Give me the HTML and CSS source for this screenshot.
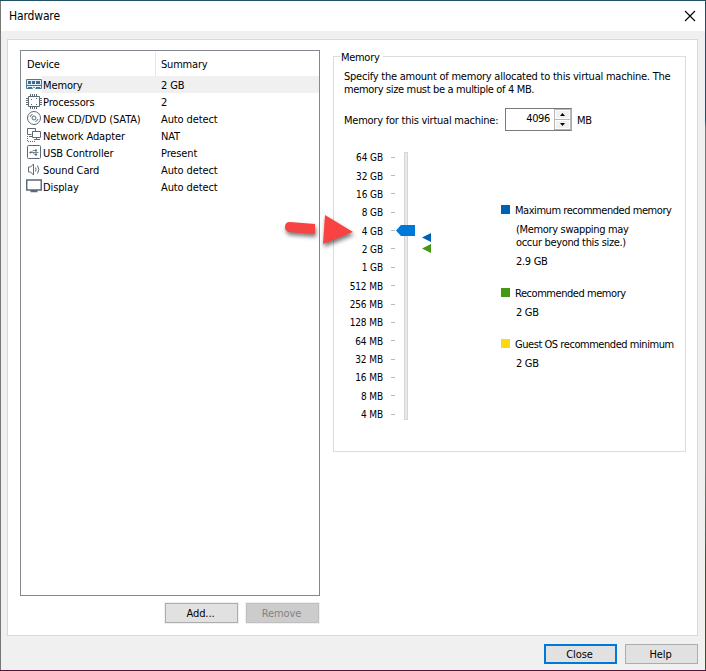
FILE: index.html
```html
<!DOCTYPE html>
<html lang="en">
<head>
<meta charset="utf-8">
<title>Hardware</title>
<link rel="stylesheet" href="styles.css">
</head>
<body>
<div class="desktop">
<main class="window">
  <header class="titlebar"><h1>Hardware</h1>
    <svg class="close-x" width="12" height="12" viewBox="0 0 12 12"><path d="M1 1L11 11M11 1L1 11"/></svg>
  </header>
  <section class="panel">
    <div class="left">
      <div class="list">
        <div class="head"><span>Device</span><span>Summary</span></div>
        <div class="row selected"><svg width="16" height="17" viewBox="0 0 16 17"><path class="memory-board" d="M.5 3.500h15v9h-6l-1-1h-1l-1 1h-6z"/><path class="chip" d="M2 5h3v3H2zM6 5h3v3H6zM10 5h4v3h-4z"/><path d="M1 9.500h14M2 11.500h4M10 11.500h4"/></svg><span>Memory</span><span>2 GB</span></div>
        <div class="row"><svg width="16" height="17" viewBox="0 0 16 17"><path d="M2.500 3.500h11v10h-11zM4.500 1v2M6.500 1v2M8.500 1v2M10.500 1v2M4.500 14v2M6.500 14v2M8.500 14v2M10.500 14v2M0 5.500h2M0 7.500h2M0 9.500h2M0 11.500h2M14 5.500h2M14 7.500h2M14 9.500h2M14 11.500h2M5 6.500h1M10 5.500h1M10 11.500h1M5 11.500h1"/></svg><span>Processors</span><span>2</span></div>
        <div class="row"><svg width="16" height="17" viewBox="0 0 16 17"><circle cx="8" cy="8" r="6.500"/><circle cx="8" cy="8" r="2"/><path d="M4 7Q4.500 5 6.500 4.500M9.500 11.500Q11.500 11 12 9"/></svg><span>New CD/DVD (SATA)</span><span>Auto detect</span></div>
        <div class="row"><svg width="16" height="17" viewBox="0 0 16 17"><path d="M5.500 7.500h-4v-6h8v3M3 9.500h3M6.500 4.500h8v6h-8zM10.500 10.500v2M8 12.500h6"/><path class="dots" d="M1.500 9v5.500H10"/></svg><span>Network Adapter</span><span>NAT</span></div>
        <div class="row"><svg width="16" height="17" viewBox="0 0 16 17"><rect x="1.500" y="1.500" width="13" height="13" rx="1"/><path class="trident" d="M3.500 8.500h9M5 8.500l2-2h2M7 8.500l1.500 2H10"/><circle class="solid" cx="4.500" cy="8.500" r="1"/><path class="solid" d="M9 5.500h2v2H9zM9 9.500h2v2H9z"/></svg><span>USB Controller</span><span>Present</span></div>
        <div class="row"><svg width="16" height="17" viewBox="0 0 16 17"><path d="M2.500 6v5h2l3 3v-11l-3 3zM9.500 6.500Q10.500 8.500 9.500 10.500M11.500 4.500Q14 8.500 11.500 12.500"/></svg><span>Sound Card</span><span>Auto detect</span></div>
        <div class="row"><svg width="16" height="17" viewBox="0 0 16 17"><path class="screen" d="M.7 2h14.600v10H.7zM4.500 13.500h7"/></svg><span>Display</span><span>Auto detect</span></div>
      </div>
      <div class="list-actions"><button class="btn">Add...</button><button class="btn disabled" disabled>Remove</button></div>
    </div>
    <div class="group">
      <h2>Memory</h2>
      <p class="description"><span class="first-line">Specify the amount of memory allocated to this virtual machine. The</span><br><span>memory size must be a multiple of 4 MB.</span></p>
      <div class="memory-field"><label>Memory for this virtual machine:</label>
        <div class="spin"><span>4096</span><div class="steppers"><i><svg width="5" height="3"><path d="M0 3h5L2.500 0z"/></svg></i><i><svg width="5" height="3"><path d="M0 0h5L2.500 3z"/></svg></i></div></div><span class="unit">MB</span></div>
      <div class="content">
        <div class="scale">
          <span>64 GB</span><span>32 GB</span><span>16 GB</span><span>8 GB</span><span>4 GB</span><span>2 GB</span><span>1 GB</span><span>512 MB</span><span>256 MB</span><span>128 MB</span><span>64 MB</span><span>32 MB</span><span>16 MB</span><span>8 MB</span><span>4 MB</span>
        </div>
        <div class="track">
          <svg class="thumb" width="19" height="11"><path d="M0 5.500L5 0h14v11H5z"/></svg>
          <svg class="markers" width="9" height="21"><path class="blue" d="M0 4.500L9 0v9z"/><path class="green" d="M0 15.500L9 11v9z"/></svg>
        </div>
        <div class="legend">
          <div class="key"><b class="blue"></b><span>Maximum recommended memory</span></div>
          <p class="note">(Memory swapping may<br>occur beyond this size.)</p>
          <p class="value">2.9 GB</p>
          <div class="key"><b class="green"></b><span>Recommended memory</span></div>
          <p class="value">2 GB</p>
          <div class="key"><b class="yellow"></b><span>Guest OS recommended minimum</span></div>
          <p class="value">2 GB</p>
        </div>
      </div>
    </div>
  </section>
  <footer><button class="btn primary">Close</button><button class="btn">Help</button></footer>
</main>
<svg class="pointer" width="80" height="44" viewBox="0 0 80 44"><path d="M7 9L32 11V21L6 19Q2 18 2 14Q2 9 7 9zM42 2L70 19L40 31z"/></svg>
</div>
</body>
</html>
```
FILE: styles.css
```css
* { box-sizing: border-box; }
body { margin: 0; font: 11px/13px "DejaVu Sans Condensed", "DejaVu Sans", sans-serif; font-stretch: condensed; letter-spacing: -.35px; color: #000; }
h1, h2, p { margin: 0; font-size: inherit; font-weight: normal; }
svg { display: block; }
.desktop { position: relative; width: 706px; height: 671px; padding: 1px; background: linear-gradient(#501735, #501735) 0 100% / 100% 1px no-repeat, linear-gradient(#1f5068, #1f5068) 0 0 / 100% 1px no-repeat, linear-gradient(#1f5068 0 18%, #777 19% 70%, #40502c 85%) 100% 0 / 1px 100% no-repeat, #777; }
.window { width: 704px; height: 669px; display: flex; flex-direction: column; background: #f0f0f0; }
.titlebar { height: 30px; background: #fff; display: flex; justify-content: space-between; align-items: center; padding: 0 9px 0 8px; }
.titlebar h1 { font-size: 12px; letter-spacing: -.15px; }
.close-x { stroke: #000; fill: none; stroke-width: 1.1; margin-top: -1px; }
.panel { margin: 8px 7px 0 6px; height: 597px; background: #fff; border: 1px solid #d9d9d9; display: flex; padding: 10px 10px 0 12px; }
.left { width: 300px; }
.list { height: 546px; border: 1px solid #828790; }
.head { height: 25px; display: grid; grid-template-columns: 134px 1fr; padding-top: 1px; line-height: 26px; letter-spacing: -.2px; }
.head span { padding-left: 6px; height: 24px; }
.head span + span { border-left: 1px solid #e5e5e5; padding-left: 5px; }
.row { height: 17px; display: grid; grid-template-columns: 21px 119px 1fr; line-height: 19px; letter-spacing: -.12px; }
.row svg { margin-left: 5px; fill: none; stroke: #5b6a75; }
.row span { white-space: nowrap; padding-left: 1px; height: 17px; }
.row span:last-child { padding-left: 0; }
.selected { background: linear-gradient(90deg, #fff 21px, #f0f0f0 21px); }
.row .memory-board { stroke: #4b7897; fill: #e4f0f7; }
.row .chip { fill: #3c6e91; stroke: none; }
.row .dots { stroke-dasharray: 1 1; }
.row .screen { stroke-width: 1.5; }
.row .trident { stroke-width: .8; }
.row .solid { fill: #5b6a75; stroke: none; }
.list-actions { display: flex; justify-content: flex-end; gap: 8px; margin: 7px 1px 0 0; }
.btn { font: inherit; letter-spacing: -.1px; color: #000; width: 73px; height: 20px; padding: 0 2px 0 0; border: 1px solid #adadad; background: #e1e1e1; text-align: center; }
.list-actions .btn { box-shadow: 0 0 0 1px #f0f0f0; }
.btn.disabled { background: #ccc; border-color: #bfbfbf; color: #838383; }
.btn.primary { border: 2px solid #0078d7; }
.group { width: 353px; height: 396px; margin: 6px 0 0 13px; border: 1px solid #dcdcdc; }
.group h2 { width: 43px; height: 13px; margin: -6px 0 0 6px; padding-left: 1px; background: #fff; letter-spacing: -.3px; }
.description { margin: 6px 0 0 10px; white-space: nowrap; }
.first-line { letter-spacing: -.23px; }
.memory-field { height: 23px; margin: 12px 0 0 10px; display: flex; align-items: center; }
.memory-field label { width: 161px; white-space: nowrap; letter-spacing: -.24px; padding-top: 1px; }
.unit { padding-top: 2px; }
.spin { width: 67px; height: 23px; border: 1px solid #7a7a7a; border-right-color: #adadad; display: flex; justify-content: flex-end; line-height: 20px; margin-right: 5px; }
.steppers { width: 17px; margin-left: 4px; padding: 1px; background: #b6b6b6; display: grid; gap: 1px; }
.steppers i { background: #f0f0f0; border: 1px solid #fff; display: grid; place-items: center; }
.content { display: flex; }
.scale { width: 62px; margin-top: 18px; height: 275.400px; display: grid; grid-template-rows: repeat(15, 18.360px); font-size: 10px; line-height: 18px; letter-spacing: -.1px; }
.scale span { display: flex; justify-content: flex-end; align-items: center; width: 49px; }
.scale span::after { content: ""; width: 4px; height: 1px; margin: -2px -12px 0 8px; background: #b9b9b9; flex-shrink: 0; }
.track { width: 4px; height: 268px; margin: 21px 0 0 8px; background: #e7eaea; border: 1px solid #d6d6d6; position: relative; }
.thumb { position: absolute; left: -9px; top: 72px; fill: #0078d7; }
.markers { position: absolute; left: 17px; top: 80px; }
svg .blue { fill: #0063b1; }
svg .green { fill: #439913; }
.legend { margin: 73px 0 0 93px; white-space: nowrap; letter-spacing: -.45px; }
.key { display: flex; gap: 5px; }
.key b { width: 9px; height: 9px; margin-top: 1px; }
b.blue { background: #0063b1; }
b.green { background: #439913; }
b.yellow { background: #ffd90f; }
.note { margin: 6px 0 0 15px; letter-spacing: -.33px; }
.value { margin: 6px 0 19px 15px; letter-spacing: -.3px; }
footer { display: flex; justify-content: flex-end; gap: 8px; padding: 8px 7px 0 0; }
.pointer { position: absolute; left: 283px; top: 213px; fill: #f94343; filter: drop-shadow(1px 3px 2px #0008); overflow: visible; }
```
